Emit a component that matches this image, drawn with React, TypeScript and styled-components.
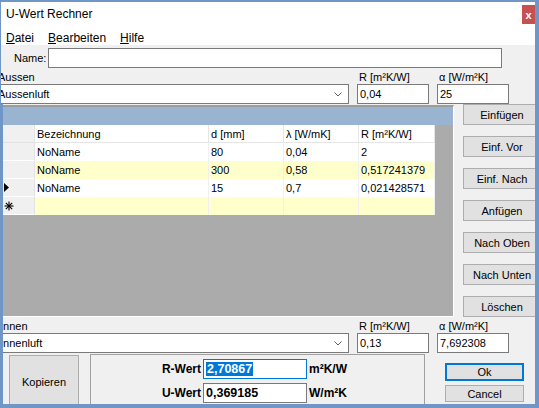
import styled, { createGlobalStyle } from 'styled-components';

const GlobalStyle = createGlobalStyle`
  html, body {
    margin: 0;
    padding: 0;
    background: #fff;
  }
  body {
    font-family: "Liberation Sans", Arial, sans-serif;
    font-size: 11px;
    color: #000;
  }
`;

const Window = styled.div`
  width: 539px;
  height: 408px;
  box-sizing: border-box;
  border-style: solid;
  border-color: #7096c8;
  border-width: 2px 4px 4px 1px;
  background: #f0f0f0;
  overflow: hidden;
  display: flex;
  flex-direction: column;
`;

const TitleBar = styled.div`
  height: 28px;
  flex-shrink: 0;
  background: #fff;
  display: flex;
  justify-content: space-between;
  align-items: flex-start;
`;

const Title = styled.div`
  padding: 4px 0 0 5px;
  font-size: 12px;
  line-height: 16px;
`;

const CloseButton = styled.div`
  width: 13px;
  height: 19px;
  margin-top: 3px;
  background: #c75050;
  color: #fff;
  font-weight: bold;
  font-size: 11px;
  display: flex;
  align-items: center;
  justify-content: center;
`;

const MenuBar = styled.div`
  box-sizing: border-box;
  height: 15px;
  flex-shrink: 0;
  background: #fff;
  display: flex;
  gap: 14px;
  padding: 2px 0 0 5px;
  font-size: 12px;
  line-height: 13px;
`;

const NameRow = styled.div`
  display: flex;
  align-items: center;
  height: 20px;
  margin-top: 3px;
  padding-left: 13px;
`;

const NameLabel = styled.span`
  margin-right: 2px;
`;

const TextBox = styled.div<{ $width?: number; $focused?: boolean; $bold?: boolean }>`
  box-sizing: border-box;
  height: 20px;
  ${p => (p.$width ? `width: ${p.$width}px;` : '')}
  background: #fff;
  border: 1px solid ${p => (p.$focused ? '#0078d7' : '#7a7a7a')};
  padding-left: 2px;
  display: flex;
  align-items: center;
  white-space: nowrap;
  overflow: hidden;
  font-weight: ${p => (p.$bold ? 'bold' : 'normal')};
  font-size: ${p => (p.$bold ? '12.5px' : '11px')};
`;

const FieldGrid = styled.div<{ $first: number }>`
  display: grid;
  grid-template-columns: ${p => p.$first}px 72px 72px;
  grid-template-rows: 13px 20px;
  column-gap: 8px;
  margin-top: 3px;
  flex-shrink: 0;
`;

const Label = styled.div<{ $shift: number }>`
  margin-left: ${p => p.$shift}px;
  line-height: 13px;
  white-space: nowrap;
`;

const Combo = styled.div`
  margin-left: -6px;
  box-sizing: border-box;
  height: 20px;
  background: #fff;
  border: 1px solid #7a7a7a;
  padding: 0 6px 0 2px;
  display: flex;
  align-items: center;
  justify-content: space-between;
  white-space: nowrap;
`;

const LowerArea = styled.div`
  flex: 1;
  border-left: 2px solid #7096c8;
  overflow: hidden;
  display: flex;
  flex-direction: column;
`;

const MiddleRow = styled.div`
  display: flex;
  align-items: flex-start;
  flex-shrink: 0;
`;

const GridPanel = styled.div`
  flex-shrink: 0;
  box-sizing: border-box;
  width: 451px;
  height: 212px;
  margin-top: 1px;
  border-top: 2px solid #9c9c9c;
  border-right: 1px solid #fff;
  border-bottom: 1px solid #fff;
  background: #ababab;
`;

const CaptionBand = styled.div`
  height: 18px;
  background: #99b4d1;
`;

const Table = styled.div`
  display: grid;
  grid-template-columns: 32px 174px 75px 75px 76px;
  grid-auto-rows: 18px;
  width: 432px;
`;

const Corner = styled.div`
  background: #f0f0f0;
  border-right: 1px solid #e3e3e3;
  border-bottom: 1px solid #e3e3e3;
`;

const HeadCell = styled.div`
  background: #fff;
  border-right: 1px solid #e5e5e5;
  border-bottom: 1px solid #e5e5e5;
  padding-left: 2px;
  display: flex;
  align-items: center;
  white-space: nowrap;
`;

const RowHead = styled.div`
  background: #f0f0f0;
  border-right: 1px solid #e3e3e3;
  border-bottom: 1px solid #fff;
  padding-left: 1px;
  display: flex;
  align-items: center;
`;

const Cell = styled.div<{ $alt: boolean }>`
  background: ${p => (p.$alt ? '#ffffcc' : '#fff')};
  border-right: 1px solid #f0f0f0;
  padding-left: 2px;
  display: flex;
  align-items: center;
  white-space: nowrap;
`;

const ButtonColumn = styled.div`
  flex-shrink: 0;
  margin-left: 9px;
  display: flex;
  flex-direction: column;
  gap: 11px;
`;

const WinButton = styled.div<{ $width: number; $height: number; $default?: boolean }>`
  flex-shrink: 0;
  box-sizing: border-box;
  width: ${p => p.$width}px;
  height: ${p => p.$height}px;
  background: #e1e1e1;
  border: ${p => (p.$default ? '2px solid #0078d7' : '1px solid #adadad')};
  display: flex;
  align-items: center;
  justify-content: center;
  white-space: nowrap;
`;

const BottomRow = styled.div`
  display: flex;
  align-items: flex-start;
  margin-top: 1px;
`;

const KopierenSlot = styled.div`
  margin: 1px 0 0 6px;
`;

const ResultPanel = styled.div`
  flex-shrink: 0;
  box-sizing: border-box;
  width: 335px;
  height: 60px;
  margin-left: 11px;
  border: 1px solid #a0a0a0;
  padding-top: 4px;
  display: grid;
  grid-template-columns: 110px 104px auto;
  grid-auto-rows: 20px;
  column-gap: 2px;
  row-gap: 4px;
  align-items: center;
`;

const ResultLabel = styled.div`
  text-align: right;
  font-weight: bold;
  font-size: 12px;
`;

const Unit = styled.div`
  font-weight: bold;
  font-size: 12px;
`;

const Selected = styled.span`
  background: #0078d7;
  color: #fff;
  line-height: 14px;
  padding: 0 1px;
`;

const DialogButtons = styled.div`
  flex-shrink: 0;
  margin: 9px 0 0 20px;
  display: flex;
  flex-direction: column;
  gap: 4px;
`;

const Chevron = () => (
  <svg width="8" height="5" viewBox="0 0 8 5">
    <polyline points="0.5,0.5 4,4 7.5,0.5" fill="none" stroke="#606060" strokeWidth="1" />
  </svg>
);

const CurrentRowMark = () => (
  <svg width="5" height="9" viewBox="0 0 5 9">
    <polygon points="0,0 5,4.5 0,9" fill="#000" />
  </svg>
);

const NewRowMark = () => (
  <svg width="10" height="10" viewBox="0 0 10 10">
    <g stroke="#000" strokeWidth="1.1">
      <line x1="5" y1="0.5" x2="5" y2="9.5" />
      <line x1="0.5" y1="5" x2="9.5" y2="5" />
      <line x1="1.8" y1="1.8" x2="8.2" y2="8.2" />
      <line x1="8.2" y1="1.8" x2="1.8" y2="8.2" />
    </g>
  </svg>
);

const layers = [
  { name: 'NoName', d: '80', l: '0,04', r: '2' },
  { name: 'NoName', d: '300', l: '0,58', r: '0,517241379' },
  { name: 'NoName', d: '15', l: '0,7', r: '0,021428571' },
];

const sideButtons = ['Einfügen', 'Einf. Vor', 'Einf. Nach', 'Anfügen', 'Nach Oben', 'Nach Unten', 'Löschen'];

export default function App() {
  return (
    <>
      <GlobalStyle />
      <Window>
        <TitleBar>
          <Title>U-Wert Rechner</Title>
          <CloseButton>x</CloseButton>
        </TitleBar>
        <MenuBar>
          <span><u>D</u>atei</span>
          <span><u>B</u>earbeiten</span>
          <span><u>H</u>ilfe</span>
        </MenuBar>

        <NameRow>
          <NameLabel>Name:</NameLabel>
          <TextBox $width={454} />
        </NameRow>

        <FieldGrid $first={348}>
          <Label $shift={-3}>Aussen</Label>
          <Label $shift={2}>R [m²K/W]</Label>
          <Label $shift={2}>α [W/m²K]</Label>
          <Combo>
            <span>Aussenluft</span>
            <Chevron />
          </Combo>
          <TextBox>0,04</TextBox>
          <TextBox>25</TextBox>
        </FieldGrid>

        <LowerArea>
          <MiddleRow>
            <GridPanel>
              <CaptionBand />
              <Table>
                <Corner />
                <HeadCell>Bezeichnung</HeadCell>
                <HeadCell>d [mm]</HeadCell>
                <HeadCell>λ [W/mK]</HeadCell>
                <HeadCell>R [m²K/W]</HeadCell>
                {layers.map((row, i) => (
                  <>
                    <RowHead key={`h${i}`}>{i === 2 && <CurrentRowMark />}</RowHead>
                    <Cell key={`n${i}`} $alt={i % 2 === 1}>{row.name}</Cell>
                    <Cell key={`d${i}`} $alt={i % 2 === 1}>{row.d}</Cell>
                    <Cell key={`l${i}`} $alt={i % 2 === 1}>{row.l}</Cell>
                    <Cell key={`r${i}`} $alt={i % 2 === 1}>{row.r}</Cell>
                  </>
                ))}
                <RowHead><NewRowMark /></RowHead>
                <Cell $alt />
                <Cell $alt />
                <Cell $alt />
                <Cell $alt />
              </Table>
            </GridPanel>
            <ButtonColumn>
              {sideButtons.map(label => (
                <WinButton key={label} $width={78} $height={21}>{label}</WinButton>
              ))}
            </ButtonColumn>
          </MiddleRow>

          <FieldGrid $first={346}>
            <Label $shift={-3}>Innen</Label>
            <Label $shift={2}>R [m²K/W]</Label>
            <Label $shift={2}>α [W/m²K]</Label>
            <Combo>
              <span>Innenluft</span>
              <Chevron />
            </Combo>
            <TextBox>0,13</TextBox>
            <TextBox>7,692308</TextBox>
          </FieldGrid>

          <BottomRow>
            <KopierenSlot>
              <WinButton $width={70} $height={54}>Kopieren</WinButton>
            </KopierenSlot>
            <ResultPanel>
              <ResultLabel>R-Wert</ResultLabel>
              <TextBox $focused $bold><Selected>2,70867</Selected></TextBox>
              <Unit>m²K/W</Unit>
              <ResultLabel>U-Wert</ResultLabel>
              <TextBox $bold>0,369185</TextBox>
              <Unit>W/m²K</Unit>
            </ResultPanel>
            <DialogButtons>
              <WinButton $width={79} $height={18} $default>Ok</WinButton>
              <WinButton $width={79} $height={17}>Cancel</WinButton>
            </DialogButtons>
          </BottomRow>
        </LowerArea>
      </Window>
    </>
  );
}
